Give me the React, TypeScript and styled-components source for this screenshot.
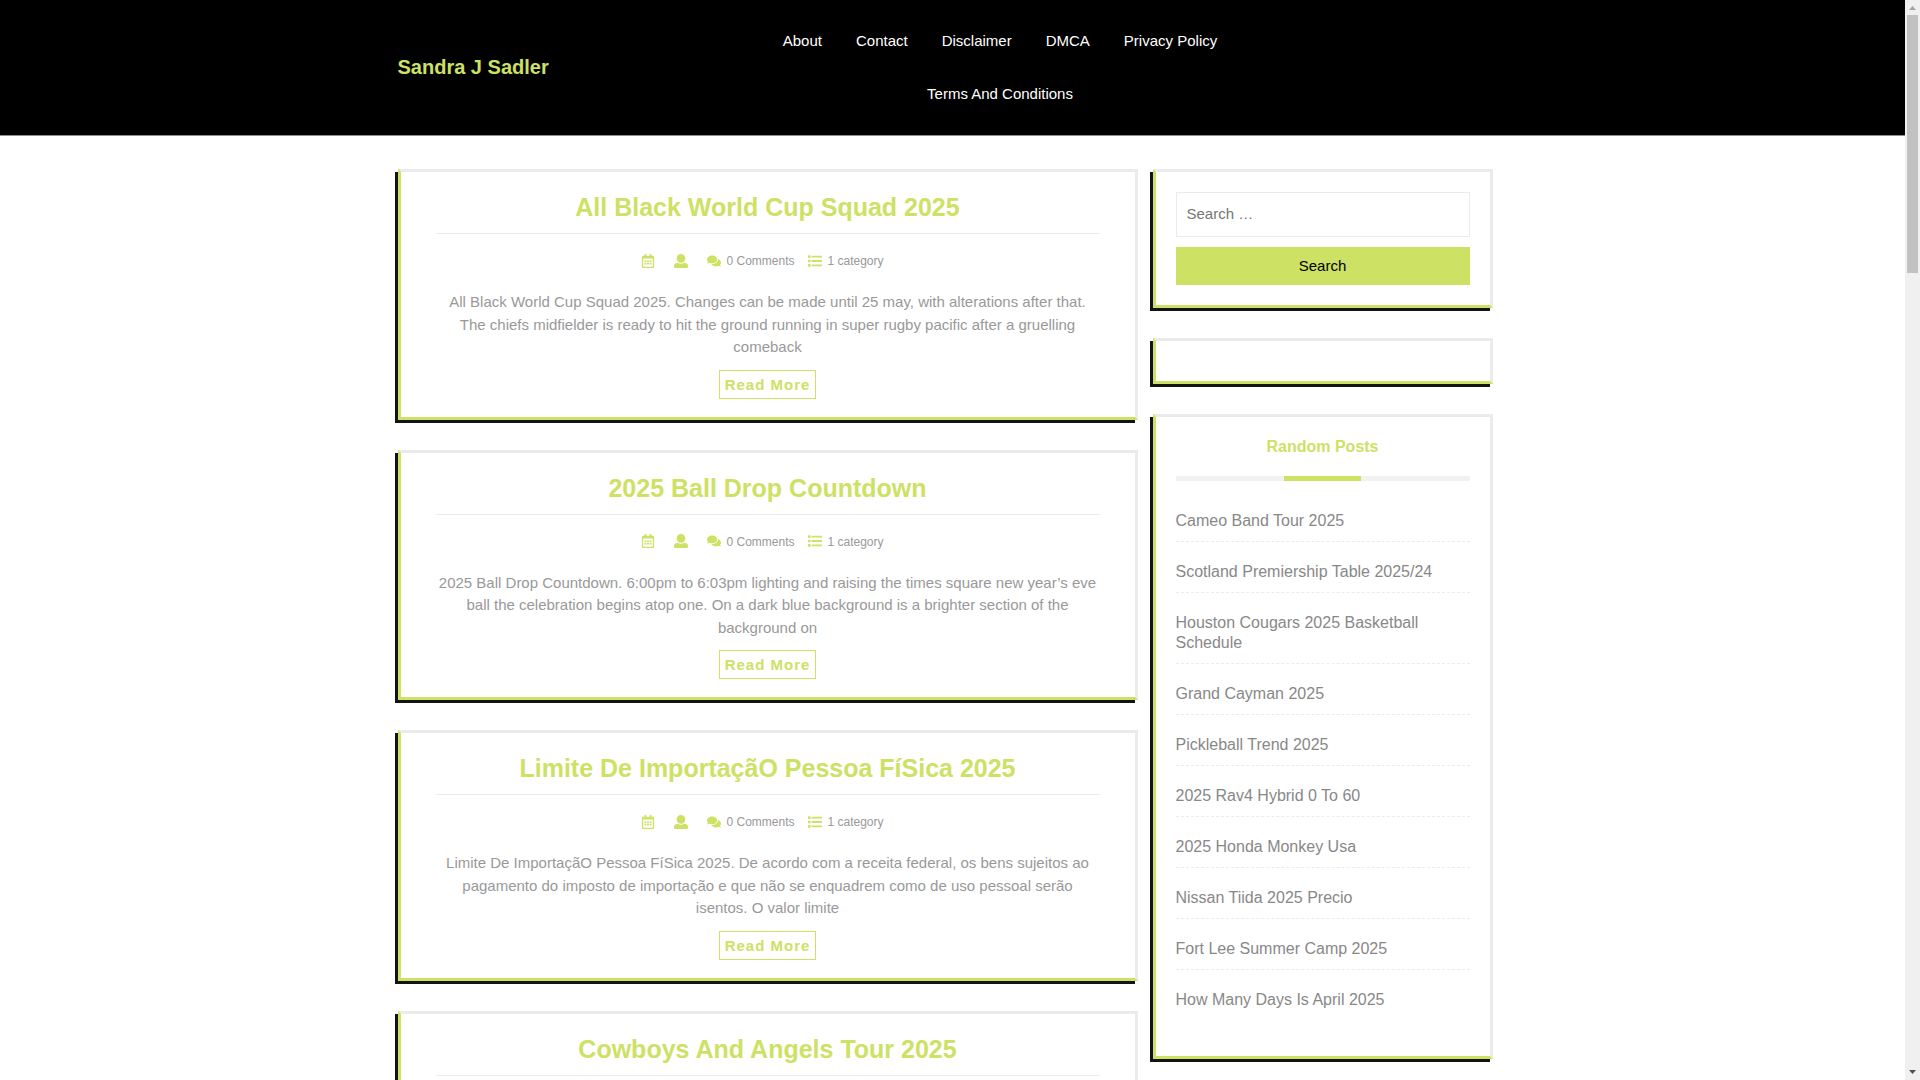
import React from 'react';
import styled, { createGlobalStyle } from 'styled-components';
import { FaComments, FaRegCalendarAlt } from 'react-icons/fa';

const lime = '#cde164';
const line = '#ebebeb';

const GlobalStyle = createGlobalStyle`
  *, *::before, *::after { box-sizing: border-box; }
  body {
    margin: 0;
    background: #fff;
    color: #999;
    font: 15px/1.5 "Liberation Sans", Arial, sans-serif;
  }
  h1, h2, h3, p, ul { margin: 0; padding: 0; }
  ul { list-style: none; }
  a { color: inherit; text-decoration: none; }
`;

const Shell = styled.div`
  display: flex;
  height: 100vh;
  overflow: hidden;
`;

const Page = styled.div`
  flex: 1;
  min-width: 0;
  overflow: hidden;
`;

const Header = styled.header`
  background: #000;
  border-bottom: 1px solid #8f8f8f;
`;

const HeaderInner = styled.div`
  display: grid;
  grid-template-columns: 3fr 7fr 2fr;
  align-items: center;
  max-width: 1140px;
  margin: 0 auto;
  padding: 14px 0 15px;
`;

const SiteTitle = styled.h1`
  padding-left: 15px;
  color: ${lime};
  font-size: 20px;
  line-height: 24px;
`;

const Menu = styled.ul`
  display: flex;
  flex-wrap: wrap;
  justify-content: center;
  padding: 0 15px;
`;

const MenuLink = styled.a`
  display: block;
  padding: 15px 17px;
  color: #fff;
  line-height: 23px;
`;

const Content = styled.div`
  display: grid;
  grid-template-columns: 2fr 1fr;
  align-items: start;
  max-width: 1110px;
  margin: 0 auto;
  padding-top: 33px;
`;

const Column = styled.div`
  display: flex;
  flex-direction: column;
  gap: 30px;
`;

const Sidebar = styled(Column).attrs({ as: 'aside' })`
  padding: 0 15px;
`;

const Box = styled.section`
  border: 3px solid;
  border-color: ${line} ${line} ${lime} ${lime};
  box-shadow: -3px 3px #121414;
`;

const PostCard = styled(Box).attrs({ as: 'article' })`
  padding: 20px 35px 18px;
  text-align: center;
`;

const PostTitle = styled.h2`
  padding-bottom: 10px;
  border-bottom: 1px solid ${line};
  color: ${lime};
  font-size: 25px;
  line-height: 31px;
`;

const Meta = styled.div`
  display: flex;
  justify-content: center;
  align-items: center;
  gap: 14px;
  padding: 17px 10px 20px 0;
  font-size: 12px;
  line-height: 20px;
`;

const MetaItem = styled.span`
  display: flex;
  align-items: center;
  gap: 5px;
  padding-right: ${(p: { $bare?: boolean }) => (p.$bare ? '5px' : '0')};

  svg {
    flex: none;
    width: auto;
    height: 14px;
    margin-bottom: 1px;
    color: ${lime};
  }
`;

const ReadMore = styled.a`
  display: inline-block;
  margin-top: 11px;
  padding: 5px;
  border: 1px solid ${lime};
  color: ${lime};
  font-weight: bold;
  line-height: 17px;
  letter-spacing: 1px;
  vertical-align: top;
`;

const Widget = styled(Box)`
  padding: 20px;
`;

const SearchForm = styled.form`
  display: grid;
  gap: 10px;
`;

const SearchInput = styled.input`
  width: 100%;
  height: 45px;
  padding: 0 10px 2px;
  border: 1px solid ${line};
  background: #fff;
  font: inherit;

  &::placeholder { color: #757575; }
`;

const SearchButton = styled.button`
  height: 38px;
  border: 0;
  background: ${lime};
  color: #000;
  font: inherit;
`;

const WidgetTitle = styled.h3`
  margin-bottom: 30px;
  color: ${lime};
  font-size: 16px;
  line-height: 20px;
  text-align: center;

  &::after {
    content: '';
    display: block;
    height: 5px;
    margin-top: 19px;
    background: linear-gradient(${lime}, ${lime}) center / 77px 5px no-repeat #f1f1f1;
  }
`;

const PostList = styled.ul`
  display: grid;
  gap: 20px;
  padding-bottom: 15px;
`;

const PostItem = styled.li`
  padding-bottom: 10px;
  border-bottom: 1px dashed ${line};
  color: #888;
  font-size: 16px;
  line-height: 20px;

  &:last-child { border-color: transparent; }
`;

const ScrollTrack = styled.div`
  display: flex;
  flex-direction: column;
  justify-content: space-between;
  align-items: center;
  width: 15px;
  background: #f0f0f0;
`;

const ScrollThumb = styled.div`
  width: 11px;
  height: 258px;
  margin-bottom: auto;
  background: #c1c1c1;
`;

const Arrow = styled.svg`
  display: block;
  width: 15px;
  height: 15px;
`;

function UserIcon() {
  return (
    <svg viewBox="0 0 512 512" fill="currentColor">
      <path d="M256 0c88.366 0 160 71.634 160 160s-71.634 160-160 160S96 248.366 96 160 167.634 0 256 0zm183.283 333.821l-71.313-17.828c-74.923 53.890-165.738 41.864-223.940 0l-71.313 17.828C29.981 344.505 0 382.903 0 426.955V464c0 26.510 21.490 48 48 48h416c26.510 0 48-21.490 48-48v-37.045c0-44.052-29.981-82.450-72.717-93.134z" />
    </svg>
  );
}

function ListIcon() {
  return (
    <svg viewBox="0 0 512 512" fill="currentColor">
      <path d="M128 116V76c0-8.837 7.163-16 16-16h352c8.837 0 16 7.163 16 16v40c0 8.837-7.163 16-16 16H144c-8.837 0-16-7.163-16-16zm16 176h352c8.837 0 16-7.163 16-16v-40c0-8.837-7.163-16-16-16H144c-8.837 0-16 7.163-16 16v40c0 8.837 7.163 16 16 16zm0 160h352c8.837 0 16-7.163 16-16v-40c0-8.837-7.163-16-16-16H144c-8.837 0-16 7.163-16 16v40c0 8.837 7.163 16 16 16zM16 144h64c8.837 0 16-7.163 16-16V64c0-8.837-7.163-16-16-16H16C7.163 48 0 55.163 0 64v64c0 8.837 7.163 16 16 16zm0 160h64c8.837 0 16-7.163 16-16v-64c0-8.837-7.163-16-16-16H16c-8.837 0-16 7.163-16 16v64c0 8.837 7.163 16 16 16zm0 160h64c8.837 0 16-7.163 16-16v-64c0-8.837-7.163-16-16-16H16c-8.837 0-16 7.163-16 16v64c0 8.837 7.163 16 16 16z" />
    </svg>
  );
}

const menu = ['About', 'Contact', 'Disclaimer', 'DMCA', 'Privacy Policy', 'Terms And Conditions'];

const posts = [
  {
    title: 'All Black World Cup Squad 2025',
    text: 'All Black World Cup Squad 2025. Changes can be made until 25 may, with alterations after that. The chiefs midfielder is ready to hit the ground running in super rugby pacific after a gruelling comeback',
  },
  {
    title: '2025 Ball Drop Countdown',
    text: '2025 Ball Drop Countdown. 6:00pm to 6:03pm lighting and raising the times square new year’s eve ball the celebration begins atop one. On a dark blue background is a brighter section of the background on',
  },
  {
    title: 'Limite De ImportaçãO Pessoa FíSica 2025',
    text: 'Limite De ImportaçãO Pessoa FíSica 2025. De acordo com a receita federal, os bens sujeitos ao pagamento do imposto de importação e que não se enquadrem como de uso pessoal serão isentos. O valor limite',
  },
  { title: 'Cowboys And Angels Tour 2025', text: '' },
];

const randomPosts = [
  'Cameo Band Tour 2025',
  'Scotland Premiership Table 2025/24',
  'Houston Cougars 2025 Basketball Schedule',
  'Grand Cayman 2025',
  'Pickleball Trend 2025',
  '2025 Rav4 Hybrid 0 To 60',
  '2025 Honda Monkey Usa',
  'Nissan Tiida 2025 Precio',
  'Fort Lee Summer Camp 2025',
  'How Many Days Is April 2025',
];

function Post({ title, text }: { title: string; text: string }) {
  return (
    <PostCard>
      <PostTitle><a href="#">{title}</a></PostTitle>
      {text && (
        <>
          <Meta>
            <MetaItem $bare><FaRegCalendarAlt /></MetaItem>
            <MetaItem $bare><UserIcon /></MetaItem>
            <MetaItem><FaComments />0 Comments</MetaItem>
            <MetaItem><ListIcon />1 category</MetaItem>
          </Meta>
          <p>{text}</p>
          <ReadMore href="#">Read More</ReadMore>
        </>
      )}
    </PostCard>
  );
}

export default function App() {
  return (
    <>
      <GlobalStyle />
      <Shell>
        <Page>
          <Header>
            <HeaderInner>
              <SiteTitle><a href="#">Sandra J Sadler</a></SiteTitle>
              <nav>
                <Menu>
                  {menu.map((m) => <li key={m}><MenuLink href="#">{m}</MenuLink></li>)}
                </Menu>
              </nav>
            </HeaderInner>
          </Header>
          <Content>
            <Column as="main">
              {posts.map((p) => <Post key={p.title} {...p} />)}
            </Column>
            <Sidebar>
              <Widget>
                <SearchForm role="search" onSubmit={(e) => e.preventDefault()}>
                  <SearchInput type="search" aria-label="Search for:" placeholder="Search …" />
                  <SearchButton type="submit">Search</SearchButton>
                </SearchForm>
              </Widget>
              <Widget />
              <Widget>
                <WidgetTitle>Random Posts</WidgetTitle>
                <PostList>
                  {randomPosts.map((t) => <PostItem key={t}><a href="#">{t}</a></PostItem>)}
                </PostList>
              </Widget>
            </Sidebar>
          </Content>
        </Page>
        <ScrollTrack aria-hidden="true">
          <Arrow viewBox="0 0 15 15"><path d="M4 10h7L7.500 6z" fill="#a3a3a3" /></Arrow>
          <ScrollThumb />
          <Arrow viewBox="0 0 15 15"><path d="M4 5h7L7.500 9z" fill="#505050" /></Arrow>
        </ScrollTrack>
      </Shell>
    </>
  );
}
